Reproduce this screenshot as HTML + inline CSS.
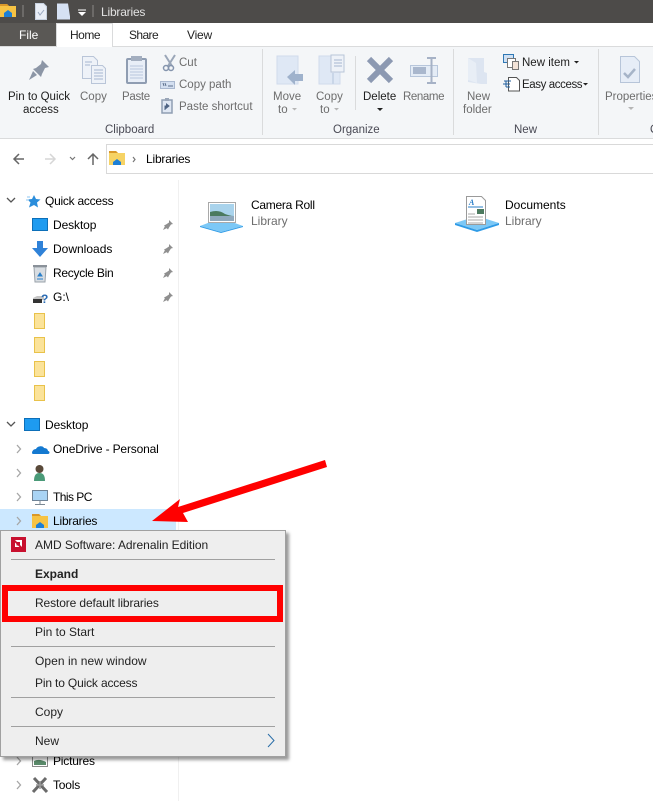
<!DOCTYPE html>
<html><head><meta charset="utf-8"><style>
html,body{margin:0;padding:0;background:#fff}
#p{position:relative;width:653px;height:801px;overflow:hidden;font:12px/14px "Liberation Sans",sans-serif;color:#000;background:#fff}
#p div{position:absolute}
.t{white-space:nowrap;height:14px}
.g{color:#6d6d6d}
.d{color:#1e1e1e}
.b{color:#4a4a55}
.r{font-size:11.500px}
svg{position:absolute;left:0;top:0}
</style></head><body><div id="p">
<div style="left:0;top:0;width:653px;height:23px;background:#4d4b49"></div>
<div style="left:0;top:23px;width:56px;height:23px;background:#5a5855"></div>
<div style="left:0;top:46px;width:653px;height:93px;background:#f4f6f8;border-top:1px solid #dadbdc;border-bottom:1px solid #dadbdc;box-sizing:border-box"></div>
<div style="left:56px;top:23px;width:57px;height:24px;background:#fff;border:1px solid #dadbdc;border-bottom:0;box-sizing:border-box"></div>
<div style="left:106px;top:144px;width:560px;height:30px;border:1px solid #d9d9d9;box-sizing:border-box"></div>
<div style="left:178px;top:180px;width:1px;height:621px;background:#f0f0f0"></div>
<div style="left:0;top:509px;width:176px;height:24px;background:#cce8ff"></div>
<div style="left:262px;top:49px;width:1px;height:86px;background:#dadbdc"></div>
<div style="left:355px;top:56px;width:1px;height:54px;background:#dadbdc"></div>
<div style="left:453px;top:49px;width:1px;height:86px;background:#dadbdc"></div>
<div style="left:598px;top:49px;width:1px;height:86px;background:#dadbdc"></div>

<svg width="653" height="801" viewBox="0 0 653 801">
<!-- title bar -->
<path d="M0 4h7l2 2h7v11H0z" fill="#f6c344"/><path d="M0 4h7l2 2H0z" fill="#d9982a"/><path d="M4 13l4-3 4 3v4H4z" fill="#1c7fd6"/>
<path d="M23 5v12M93 5v12" stroke="#8a8987" stroke-width="1"/>
<path d="M35.500 3.500h8l3 3v13h-11z" fill="#e9eef6" stroke="#c8d2e0"/><path d="M38 12l2 3 4-5" stroke="#9aa8bf" fill="none"/>
<path d="M57 3.500h11l2 13v3H57z" fill="#d6e1f3"/>
<path d="M78 10h8" stroke="#fff"/><path d="M78 12h8l-4 4z" fill="#fff"/>
<!-- pin -->
<path d="M42 60l7 7-4 1-3 6-1 3-8-8 3-1 5-4z" fill="#8c96a6"/><path d="M33 71l4 4-8 5z" fill="#8c96a6"/>
<!-- copy -->
<path d="M82.500 56.500h11l4 4v18h-15z" fill="#eef2f8" stroke="#b9c5d8"/>
<path d="M91.500 65.500h11l3 3v15h-14z" fill="#eef2f8" stroke="#b9c5d8"/>
<path d="M94 70h9M94 73h9M94 76h9M94 79h9M85 62h7M85 65h5" stroke="#a6b6cf"/>
<!-- paste -->
<rect x="127" y="59" width="19" height="24" rx="1" fill="#e8eef7" stroke="#8f9db2" stroke-width="2"/>
<rect x="131" y="56" width="11" height="5" fill="#a3aebf"/>
<path d="M130 66h13M130 69h13M130 72h13M130 75h13M130 78h13" stroke="#b9c7dc"/>
<!-- cut -->
<path d="M165 55l7 11M175 55l-7 11" stroke="#9aa6b8" stroke-width="2" fill="none"/>
<circle cx="166" cy="68" r="2.500" fill="none" stroke="#8494ad" stroke-width="1.500"/><circle cx="171" cy="68" r="2.500" fill="none" stroke="#8494ad" stroke-width="1.500"/>
<!-- copy path -->
<rect x="160.500" y="81.500" width="14" height="7" fill="#d3dff0" stroke="#a9b8cf" stroke-width="1"/>
<path d="M163 83l1 3M165 83l1 3M168 86h5" stroke="#5c6f8c"/>
<!-- paste shortcut -->
<rect x="162" y="100" width="10" height="13" fill="#dfe7f3" stroke="#8f9db2" stroke-width="1.500"/><rect x="165" y="98" width="4" height="3" fill="#9aa6b8"/>
<path d="M165 110v-4h3M166.500 104l2.500 2-2.500 2z" stroke="#4f6484" fill="#4f6484"/>
<!-- move to -->
<rect x="277" y="56" width="21" height="28" fill="#dfe8f5" stroke="#d0dbeb"/>
<path d="M287 77l8-7v4h8v7h-8v4z" fill="#9fb2cc"/>
<path d="M292 108h5l-2.500 2.500z" fill="#b5b5b5"/>
<!-- copy to -->
<rect x="319" y="56" width="21" height="28" fill="#dfe8f5" stroke="#d0dbeb"/>
<rect x="331" y="55" width="13" height="17" fill="#eef2f8" stroke="#b9c5d8"/>
<path d="M334 60h8M334 63h8M334 66h8" stroke="#a6b6cf"/>
<path d="M333 73v11" stroke="#c9d6e8" stroke-width="2"/>
<path d="M334 108h5l-2.500 2.500z" fill="#b5b5b5"/>
<!-- delete -->
<path d="M369 59l22 22M391 59l-22 22" stroke="#8c99b2" stroke-width="6" fill="none"/>
<path d="M377 108h6l-3 3z" fill="#222"/>
<!-- rename -->
<rect x="410.500" y="65.500" width="27" height="11" fill="#e4ecf6" stroke="#b7c6db"/>
<rect x="413" y="67" width="13" height="7" fill="#a9b7cd"/>
<path d="M427 58h9M431.500 58v25M427 83h9" stroke="#a6b2c6" stroke-width="2" fill="none"/>
<!-- new folder -->
<path d="M468 58h16v14l3 1v11h-6l-13-2z" fill="#dde5f1"/><path d="M468 80v-22l8 5 1 20z" fill="#e8eef6"/>
<!-- new item -->
<rect x="503.500" y="54.500" width="10" height="8" fill="#cfe0f3" stroke="#2f78b5"/>
<rect x="507.500" y="58.500" width="8" height="9" fill="#fff" stroke="#777"/>
<rect x="512.500" y="61.500" width="6" height="8" fill="#f2e3d8" stroke="#777"/>
<!-- easy access -->
<path d="M508.500 77.500h8l3 3v10.500h-11z" fill="#fff" stroke="#555"/>
<path d="M504 81h7M503 84h7M506 87h4M506 81v6" stroke="#1f5e9e" fill="none"/>
<path d="M574 61h5l-2.500 2.500zM583 83h5l-2.500 2.500z" fill="#222"/>
<!-- properties -->
<path d="M620.500 56.500h14l5 5v21h-19z" fill="#e6edf7" stroke="#b7c5d9"/>
<path d="M624 73l4 4 7-8" stroke="#a6b4c8" stroke-width="2.500" fill="none"/>
<path d="M628 107h6l-3 3z" fill="#b5b5b5"/>
<!-- nav arrows -->
<path d="M24 159H14M19 154l-5 5 5 5" stroke="#666" stroke-width="1.500" fill="none"/>
<path d="M45 159h10M50 154l5 5-5 5" stroke="#d6d6d6" stroke-width="1.500" fill="none"/>
<path d="M70 157l2.500 2.500 2.500-2.500" stroke="#777" stroke-width="1.200" fill="none"/>
<path d="M93 165V155M88 159l5-5 5 5" stroke="#666" stroke-width="1.500" fill="none"/>
<g transform="translate(109,150)"><path d="M0 1h7l2 2h7v12H0z" fill="#f6d365"/><path d="M0 1h7l2 2H0z" fill="#d9982a"/><path d="M4 12l4-3 4 3v3H4z" fill="#1c7fd6"/></g>
<path d="M133 157l2 2.500-2 2.500" stroke="#777" stroke-width="1.200" fill="none"/>
<!-- expanders -->
<path d="M7 198l4 4 4-4M7 422l4 4 4-4" stroke="#555" stroke-width="1.300" fill="none"/>
<path d="M17 445l3.500 4-3.500 4M17 469l3.500 4-3.500 4M17 493l3.500 4-3.500 4M17 517l3.500 4-3.500 4M17 757l3.500 4-3.500 4M17 781l3.500 4-3.500 4" stroke="#a6a6a6" stroke-width="1.300" fill="none"/>
<!-- quick access star -->
<path d="M34 195l2 4 4.500.5-3.500 3 1 5-4-2.500-5 2.500 1.500-5-3-3 4.500-.5z" fill="#2a8ddb"/><path d="M27 197h3M26 200h3" stroke="#8cc6f0"/>
<!-- desktop -->
<rect x="32.500" y="218.500" width="15" height="12" fill="#1e9bf0" stroke="#0d6fb8"/>
<rect x="24.500" y="418.500" width="15" height="12" fill="#1e9bf0" stroke="#0d6fb8"/>
<!-- downloads -->
<path d="M37 241h6v7h5l-8 9-8-9h5z" fill="#2f82d8"/>
<!-- recycle -->
<path d="M34 267h12l-1 15H35z" fill="#d8dde2" stroke="#9aa2aa"/><path d="M33 266h14" stroke="#8a9199" stroke-width="2"/><path d="M38 276l2-3 2 3zM37 279h6" stroke="#2a7fc9" fill="#2a7fc9"/>
<!-- G drive -->
<path d="M33 298l4-2h7v4H33z" fill="#c5c5c5"/><rect x="33" y="299" width="9" height="4" fill="#333"/><text x="41" y="303" font-size="12" font-weight="bold" fill="#2a6cb5" font-family="Liberation Sans">?</text>
<!-- pins -->
<g fill="#8f8f8f">
<path id="a" d="M169 220l4 4-2 .5-2 3-1 2-4-4 2-1 3-2zM165 226l2 2-4 2z"/>
<path d="M169 244l4 4-2 .5-2 3-1 2-4-4 2-1 3-2zM165 250l2 2-4 2z"/>
<path d="M169 268l4 4-2 .5-2 3-1 2-4-4 2-1 3-2zM165 274l2 2-4 2z"/>
<path d="M169 292l4 4-2 .5-2 3-1 2-4-4 2-1 3-2zM165 298l2 2-4 2z"/>
</g>
<!-- yellow docs -->
<g fill="#fbe39a" stroke="#e9c24a">
<path d="M34.500 313.500h10v15h-10z"/><path d="M34.500 337.500h10v15h-10z"/><path d="M34.500 361.500h10v15h-10z"/><path d="M34.500 385.500h10v15h-10z"/>
</g>
<!-- onedrive -->
<path d="M33 454c-2 0-1-5 3-5 1-3 7-4 8-1 3 0 4 2 4 3 2 0 2 3 0 3z" fill="#1479d0"/>
<!-- user -->
<circle cx="39.500" cy="469" r="4" fill="#5a4a3a"/><path d="M34 481c0-6 2-8 5.500-8s5.500 2 5.500 8z" fill="#4a9a78"/>
<!-- this pc -->
<rect x="32.500" y="490.500" width="15" height="10" fill="#a9d4f5" stroke="#6f8396"/><path d="M40 501v3M35 504.500h10" stroke="#7b8894"/>
<!-- libraries -->
<g transform="translate(32,513)"><path d="M0 1h7l2 2h7v12H0z" fill="#f6c344"/><path d="M0 1h7l2 2H0z" fill="#d9982a"/><path d="M4 12l4-3 4 3v3H4z" fill="#1c7fd6"/></g>
<!-- camera roll lib -->
<path d="M200 226l21-8 22 8-22 6z" fill="#7cc8f6"/><path d="M200 226l21 6v1l-21-6zM243 226l-22 6v1l22-6z" fill="#2f9be6"/>
<rect x="208.500" y="202.500" width="27" height="20" fill="#fff" stroke="#a9a9a9"/>
<rect x="210" y="204" width="24" height="17" fill="#a9d3ec"/><path d="M210 212c6-2 11-1 15 2 3 1 6 2 9 2v1H210z" fill="#4b7a5f"/><rect x="210" y="216" width="24" height="5" fill="#8fa9bd"/>
<!-- documents lib -->
<path d="M455 223l22-7 22 7-22 7z" fill="#7cc8f6"/><path d="M455 223l22 7v2l-22-7zM499 223l-22 7v2l22-7z" fill="#2f9be6"/>
<path d="M466.500 196.500h15l4 4v24h-19z" fill="#fff" stroke="#9a9a9a"/>
<path d="M468 207h15" stroke="#2a7fc9"/><path d="M468 214h7M468 217h15M468 220h15M468 223h15" stroke="#aaa"/>
<text x="469" y="205" font-size="8" font-style="italic" font-weight="bold" fill="#2a7fc9" font-family="Liberation Serif">A</text>
<rect x="477" y="209" width="7" height="5" fill="#4b7a5f"/>
<!-- pictures -->
<rect x="32.500" y="754.500" width="15" height="12" fill="#fff" stroke="#8a8a8a"/><path d="M34 761c4-2 8-1 12 1v3H34z" fill="#5a8a6a"/>
<!-- tools -->
<path d="M34 778l13 14M46 778l-13 14" stroke="#6a6a6a" stroke-width="3"/><path d="M40 781v8M36 785h8" stroke="#999" stroke-width="1.500"/>
</svg>

<div class="t" style="left:101px;top:5px;color:#e2e2e2;letter-spacing:-.2px">Libraries</div>
<div class="t" style="left:19px;top:28px;color:#fff">File</div>
<div class="t" style="left:70px;top:28px;color:#222;letter-spacing:-.5px">Home</div>
<div class="t" style="left:129px;top:28px;color:#222;letter-spacing:-.6px">Share</div>
<div class="t" style="left:187px;top:28px;color:#222;letter-spacing:-.2px">View</div>
<div class="t d r" style="left:8px;top:90px">Pin to Quick</div>
<div class="t d r" style="left:23px;top:103px">access</div>
<div class="t g r" style="left:80px;top:90px">Copy</div>
<div class="t g r" style="left:122px;top:90px;letter-spacing:-.3px">Paste</div>
<div class="t g r" style="left:179px;top:56px">Cut</div>
<div class="t g r" style="left:179px;top:78px">Copy path</div>
<div class="t g r" style="left:179px;top:100px">Paste shortcut</div>
<div class="t b r" style="left:105px;top:123px">Clipboard</div>
<div class="t g r" style="left:273px;top:90px">Move</div>
<div class="t g r" style="left:278px;top:103px">to</div>
<div class="t g r" style="left:316px;top:90px">Copy</div>
<div class="t g r" style="left:320px;top:103px">to</div>
<div class="t b r" style="left:333px;top:123px">Organize</div>
<div class="t d r" style="left:363px;top:90px">Delete</div>
<div class="t g r" style="left:403px;top:90px;letter-spacing:-.4px">Rename</div>
<div class="t g r" style="left:467px;top:90px">New</div>
<div class="t g r" style="left:463px;top:103px">folder</div>
<div class="t b r" style="left:514px;top:123px">New</div>
<div class="t d r" style="left:522px;top:56px">New item</div>
<div class="t d r" style="left:522px;top:78px;letter-spacing:-.4px">Easy access</div>
<div class="t g r" style="left:605px;top:90px">Properties</div>
<div class="t b r" style="left:650px;top:123px">O</div>
<div class="t" style="left:146px;top:152px;letter-spacing:-.2px">Libraries</div>

<div class="t" style="left:45px;top:194px;letter-spacing:-.25px">Quick access</div>
<div class="t" style="left:53px;top:218px;letter-spacing:-.1px">Desktop</div>
<div class="t" style="left:53px;top:242px">Downloads</div>
<div class="t" style="left:53px;top:266px;letter-spacing:-.27px">Recycle Bin</div>
<div class="t" style="left:53px;top:290px">G:\</div>
<div class="t" style="left:45px;top:418px;letter-spacing:-.1px">Desktop</div>
<div class="t" style="left:53px;top:442px;letter-spacing:-.16px">OneDrive - Personal</div>
<div class="t" style="left:53px;top:490px;letter-spacing:-.55px">This PC</div>
<div class="t" style="left:53px;top:514px;letter-spacing:-.2px">Libraries</div>
<div class="t" style="left:53px;top:754px;letter-spacing:-.2px">Pictures</div>
<div class="t" style="left:53px;top:778px;letter-spacing:-.2px">Tools</div>
<div class="t" style="left:251px;top:198px;letter-spacing:-.27px">Camera Roll</div>
<div class="t g" style="left:251px;top:214px">Library</div>
<div class="t" style="left:505px;top:198px">Documents</div>
<div class="t g" style="left:505px;top:214px">Library</div>

<!-- context menu -->
<div style="left:0;top:530px;width:286px;height:227px;background:#eee;border:1px solid #a0a0a0;box-sizing:border-box;box-shadow:3px 3px 3px rgba(0,0,0,.4)"></div>
<div style="left:11px;top:559px;width:264px;height:1px;background:#a0a0a0"></div>
<div style="left:11px;top:646px;width:264px;height:1px;background:#a0a0a0"></div>
<div style="left:11px;top:697px;width:264px;height:1px;background:#a0a0a0"></div>
<div style="left:11px;top:726px;width:264px;height:1px;background:#a0a0a0"></div>
<div style="left:2px;top:585px;width:281px;height:37px;border:6px solid #f00;box-sizing:border-box"></div>
<div class="t" style="left:35px;top:538px;color:#222;letter-spacing:-.03px">AMD Software: Adrenalin Edition</div>
<div class="t" style="left:35px;top:567px;font-weight:bold;color:#222">Expand</div>
<div class="t" style="left:35px;top:596px;color:#222;letter-spacing:-.12px">Restore default libraries</div>
<div class="t" style="left:35px;top:625px;color:#222">Pin to Start</div>
<div class="t" style="left:35px;top:654px;color:#222;letter-spacing:.05px">Open in new window</div>
<div class="t" style="left:35px;top:676px;color:#222;letter-spacing:-.16px">Pin to Quick access</div>
<div class="t" style="left:35px;top:705px;color:#222">Copy</div>
<div class="t" style="left:35px;top:734px;color:#222">New</div>

<svg width="653" height="801" viewBox="0 0 653 801">
<rect x="11" y="537" width="15" height="15" fill="#c8102e"/>
<path d="M15 540h7v7l-2-2v-3h-3zM15 542.500v4.500h4.500l-1.500-1.500h-1.500V544z" fill="#fff"/>
<path d="M268 734l6 6.500-6 6.500" stroke="#2a6ea8" stroke-width="1" fill="none"/>
<polygon points="152,521 180,499 178,507 325,460 327,467 183,513 188,522" fill="#f00"/>
</svg>
</div></body></html>
